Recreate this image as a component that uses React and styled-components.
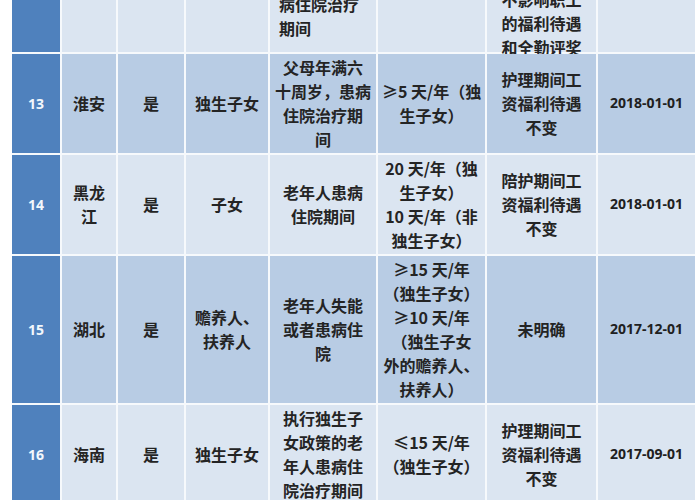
import React from 'react';
import styled, { createGlobalStyle } from 'styled-components';

const Global = createGlobalStyle`
  html, body { margin: 0; padding: 0; background: #ffffff; overflow: hidden; }
  body { font-family: "Noto Sans CJK SC", sans-serif; }
`;

const Page = styled.div`
  width: 700px;
  height: 500px;
  padding-left: 12px;
  box-sizing: border-box;
  overflow: hidden;
`;

const Grid = styled.div`
  display: grid;
  grid-template-columns: 48px 54px 66px 82px 106px 107px 109px 97px;
  grid-template-rows: 72px;
  grid-auto-rows: auto;
  gap: 2px;
  width: 683px;
  margin-top: -20px;
  background: #f6f9fc;
`;

const Cell = styled.div`
  display: flex;
  flex-direction: column;
  justify-content: center;
  min-width: 0;
  padding: ${p => 1 + (p.$shift || 0)}px 4px 2px ${p => (p.$align === 'left' ? '9px' : '4px')};
  background: ${p => (p.$tone === 'dark' ? '#b8cce4' : '#dbe5f1')};
  text-align: ${p => p.$align || 'center'};
  font-family: "Noto Sans CJK SC", sans-serif;
  font-weight: 700;
  font-size: 16px;
  line-height: 24px;
  color: #242424;
`;

const Line = styled.span`
  display: block;
  white-space: nowrap;
`;

const NumCell = styled.div`
  display: flex;
  align-items: center;
  justify-content: center;
  background: #4f81bd;
  color: #f2f7fc;
  font-family: "Open Sans", sans-serif;
  font-weight: 700;
  font-size: 14px;
`;

const DateCell = styled(Cell)`
  font-family: "Open Sans", sans-serif;
  font-size: 14px;
  color: #202020;
`;

const rows = [
  {
    key: 'r12',
    num: '',
    tone: 'light',
    province: [],
    yes: [],
    who: [],
    cond: ['病住院治疗', '期间'],
    condAlign: 'left',
    days: [],
    pay: ['不影响职工', '的福利待遇', '和全勤评奖'],
    payShift: 15,
    date: [],
  },
  {
    key: 'r13',
    num: '13',
    tone: 'dark',
    province: ['淮安'],
    yes: ['是'],
    who: ['独生子女'],
    cond: ['父母年满六', '十周岁，患病', '住院治疗期', '间'],
    days: ['≥5 天/年（独', '生子女）'],
    pay: ['护理期间工', '资福利待遇', '不变'],
    date: ['2018-01-01'],
  },
  {
    key: 'r14',
    num: '14',
    tone: 'light',
    province: ['黑龙', '江'],
    yes: ['是'],
    who: ['子女'],
    cond: ['老年人患病', '住院期间'],
    days: ['20 天/年（独', '生子女）', '10 天/年（非', '独生子女）'],
    pay: ['陪护期间工', '资福利待遇', '不变'],
    date: ['2018-01-01'],
  },
  {
    key: 'r15',
    num: '15',
    tone: 'dark',
    province: ['湖北'],
    yes: ['是'],
    who: ['赡养人、', '扶养人'],
    cond: ['老年人失能', '或者患病住', '院'],
    days: ['≥15 天/年', '（独生子女）', '≥10 天/年', '（独生子女', '外的赡养人、', '扶养人）'],
    pay: ['未明确'],
    date: ['2017-12-01'],
  },
  {
    key: 'r16',
    num: '16',
    tone: 'light',
    province: ['海南'],
    yes: ['是'],
    who: ['独生子女'],
    cond: ['执行独生子', '女政策的老', '年人患病住', '院治疗期间'],
    days: ['≤15 天/年', '（独生子女）'],
    pay: ['护理期间工', '资福利待遇', '不变'],
    date: ['2017-09-01'],
  },
];

const Lines = ({ items }) => items.map((t, i) => <Line key={i}>{t}</Line>);

export default function App() {
  return (
    <>
      <Global />
      <Page>
        <Grid>
          {rows.map(r => (
            <React.Fragment key={r.key}>
              <NumCell>{r.num}</NumCell>
              <Cell $tone={r.tone}><Lines items={r.province} /></Cell>
              <Cell $tone={r.tone}><Lines items={r.yes} /></Cell>
              <Cell $tone={r.tone}><Lines items={r.who} /></Cell>
              <Cell $tone={r.tone} $align={r.condAlign}><Lines items={r.cond} /></Cell>
              <Cell $tone={r.tone}><Lines items={r.days} /></Cell>
              <Cell $tone={r.tone} $shift={r.payShift}><Lines items={r.pay} /></Cell>
              <DateCell $tone={r.tone}><Lines items={r.date} /></DateCell>
            </React.Fragment>
          ))}
        </Grid>
      </Page>
    </>
  );
}
